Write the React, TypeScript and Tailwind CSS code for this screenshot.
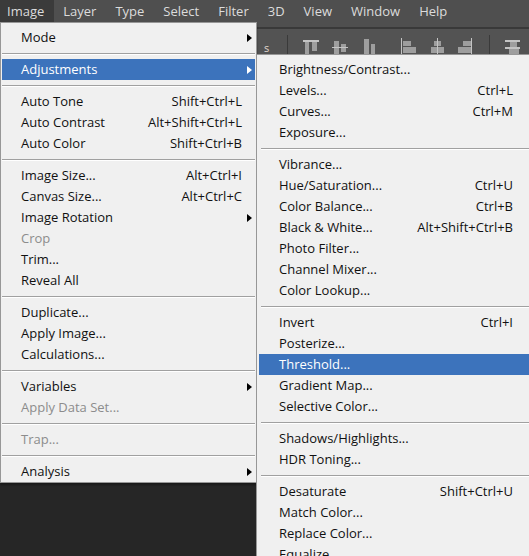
import React from "react";

type Entry =
  | { label: string; shortcut?: string; sub?: boolean; disabled?: boolean; active?: boolean }
  | "sep";

const leftItems: Entry[] = [
  { label: "Mode", sub: true },
  "sep",
  { label: "Adjustments", sub: true, active: true },
  "sep",
  { label: "Auto Tone", shortcut: "Shift+Ctrl+L" },
  { label: "Auto Contrast", shortcut: "Alt+Shift+Ctrl+L" },
  { label: "Auto Color", shortcut: "Shift+Ctrl+B" },
  "sep",
  { label: "Image Size...", shortcut: "Alt+Ctrl+I" },
  { label: "Canvas Size...", shortcut: "Alt+Ctrl+C" },
  { label: "Image Rotation", sub: true },
  { label: "Crop", disabled: true },
  { label: "Trim..." },
  { label: "Reveal All" },
  "sep",
  { label: "Duplicate..." },
  { label: "Apply Image..." },
  { label: "Calculations..." },
  "sep",
  { label: "Variables", sub: true },
  { label: "Apply Data Set...", disabled: true },
  "sep",
  { label: "Trap...", disabled: true },
  "sep",
  { label: "Analysis", sub: true },
];

const rightItems: Entry[] = [
  { label: "Brightness/Contrast..." },
  { label: "Levels...", shortcut: "Ctrl+L" },
  { label: "Curves...", shortcut: "Ctrl+M" },
  { label: "Exposure..." },
  "sep",
  { label: "Vibrance..." },
  { label: "Hue/Saturation...", shortcut: "Ctrl+U" },
  { label: "Color Balance...", shortcut: "Ctrl+B" },
  { label: "Black & White...", shortcut: "Alt+Shift+Ctrl+B" },
  { label: "Photo Filter..." },
  { label: "Channel Mixer..." },
  { label: "Color Lookup..." },
  "sep",
  { label: "Invert", shortcut: "Ctrl+I" },
  { label: "Posterize..." },
  { label: "Threshold...", active: true },
  { label: "Gradient Map..." },
  { label: "Selective Color..." },
  "sep",
  { label: "Shadows/Highlights..." },
  { label: "HDR Toning..." },
  "sep",
  { label: "Desaturate", shortcut: "Shift+Ctrl+U" },
  { label: "Match Color..." },
  { label: "Replace Color..." },
  { label: "Equalize" },
];

const menuBar = ["Image", "Layer", "Type", "Select", "Filter", "3D", "View", "Window", "Help"];

function Arrow({ white }: { white?: boolean }) {
  return (
    <svg width="5" height="8" viewBox="0 0 5 8" className="block">
      <path d="M0 0 L5 4 L0 8 Z" fill={white ? "#ffffff" : "#000000"} />
    </svg>
  );
}

function Separator({ indent }: { indent?: boolean }) {
  return (
    <div className={`h-[11px] flex flex-col justify-center ${indent ? "pl-[2px]" : ""}`}>
      <div className="h-[1px] bg-[#a0a0a0]" />
      <div className="h-[1px] bg-[#ffffff]" />
    </div>
  );
}

function LeftRow({ e }: { e: Exclude<Entry, "sep"> }) {
  const color = e.active ? "text-[#ffffff]" : e.disabled ? "text-[#8c8c8c]" : "text-[#111111]";
  return (
    <div
      className={`h-[21px] flex items-center pl-[19px] ${color} ${
        e.active ? "bg-[#3c73bc]" : ""
      }`}
    >
      <span className="flex-1 whitespace-nowrap">{e.label}</span>
      {e.shortcut && <span className="whitespace-nowrap">{e.shortcut}</span>}
      <div className="w-[13px] h-full flex items-center justify-end pr-[3px]">
        {e.sub && <Arrow white={e.active} />}
      </div>
    </div>
  );
}

function RightRow({ e }: { e: Exclude<Entry, "sep"> }) {
  const color = e.active ? "text-[#ffffff]" : e.disabled ? "text-[#8c8c8c]" : "text-[#111111]";
  return (
    <div
      className={`h-[21px] flex items-center pl-[20px] pr-[30px] ${color} ${
        e.active ? "bg-[#3c73bc]" : ""
      }`}
    >
      <span className="flex-1 whitespace-nowrap">{e.label}</span>
      {e.shortcut && <span className="whitespace-nowrap">{e.shortcut}</span>}
    </div>
  );
}

const iconFill = "#9e9e9e";
const barFill = "#c4c4c4";

function ToolIcon({ x0, children }: { x0: number; children: React.ReactNode }) {
  return (
    <svg width="20" height="25" viewBox={`${x0} 29 20 25`} className="block shrink-0">
      {children}
    </svg>
  );
}

export default function App() {
  return (
    <div
      className="relative w-[529px] h-[556px] overflow-hidden bg-[#262626] text-[13px] leading-none"
      style={{ fontFamily: '"Open Sans", "Noto Sans", sans-serif' }}
    >
      {/* Menu bar */}
      <div className="h-[27px] bg-[#4f4f4f] flex items-start text-[#dcdcdc]">
        {menuBar.map((m, i) => (
          <div
            key={m}
            className={`h-[22px] flex items-center pt-[1px] ${
              i === 0 ? "pl-[7px] pr-[9.5px] bg-[#3b3b3b]" : "px-[9.5px]"
            }`}
          >
            {m}
          </div>
        ))}
      </div>
      <div className="h-[2px] bg-[#393939]" />
      {/* Options toolbar */}
      <div className="h-[30px] bg-[#535353] flex items-start">
        <div className="w-[264px] shrink-0" />
        <div className="w-[8px] shrink-0 mt-[13px] text-[11px] text-[#e0d8d0]">s</div>
        <div className="ml-[15px] w-[1px] h-[24px] mt-[6px] bg-[#3a3a3a] shrink-0" />
        <div className="ml-[12px]">
          <ToolIcon x0={300}>
            <rect x="303" y="40" width="16" height="2" fill={barFill} />
            <rect x="305" y="42" width="4" height="14" fill={iconFill} />
            <rect x="312" y="42" width="5" height="9" fill={iconFill} />
          </ToolIcon>
        </div>
        <div className="ml-[9px]">
          <ToolIcon x0={329}>
            <rect x="334" y="41" width="5" height="14" fill={iconFill} />
            <rect x="341" y="44" width="5" height="8" fill={iconFill} />
            <rect x="332" y="47" width="16" height="1" fill={barFill} />
          </ToolIcon>
        </div>
        <div className="ml-[10px]">
          <ToolIcon x0={359}>
            <rect x="364" y="39" width="5" height="16" fill={iconFill} />
            <rect x="371" y="44" width="4" height="11" fill={iconFill} />
          </ToolIcon>
        </div>
        <div className="ml-[19px]">
          <ToolIcon x0={398}>
            <rect x="401" y="38" width="1" height="17" fill={barFill} />
            <rect x="403" y="41" width="8" height="5" fill={iconFill} />
            <rect x="403" y="47" width="13" height="6" fill={iconFill} />
          </ToolIcon>
        </div>
        <div className="ml-[10px]">
          <ToolIcon x0={428}>
            <rect x="434" y="41" width="7" height="5" fill={iconFill} />
            <rect x="431" y="47" width="13" height="6" fill={iconFill} />
            <rect x="437" y="38" width="1" height="17" fill={barFill} />
          </ToolIcon>
        </div>
        <div className="ml-[7px]">
          <ToolIcon x0={455}>
            <rect x="471" y="38" width="1" height="17" fill={barFill} />
            <rect x="463" y="41" width="8" height="5" fill={iconFill} />
            <rect x="458" y="47" width="13" height="6" fill={iconFill} />
          </ToolIcon>
        </div>
        <div className="ml-[14px] w-[1px] h-[24px] mt-[6px] bg-[#3a3a3a] shrink-0" />
        <div className="ml-[12px]">
          <ToolIcon x0={502}>
            <rect x="505" y="40" width="15" height="2" fill={barFill} />
            <rect x="510" y="42" width="7" height="5" fill={iconFill} />
            <rect x="505" y="47" width="15" height="2" fill={barFill} />
            <rect x="509" y="49" width="10" height="5" fill={iconFill} />
          </ToolIcon>
        </div>
      </div>

      {/* Image menu */}
      <div className="absolute left-0 top-[22px] w-[257px] bg-[#f0f0f0] border border-[#979797] px-[1px] pt-[4px] shadow-[0_2px_2px_rgba(0,0,0,0.35)]">
        {leftItems.map((e, i) =>
          e === "sep" ? <Separator key={i} /> : <LeftRow key={i} e={e} />
        )}
      </div>

      {/* Adjustments submenu */}
      <div className="absolute left-[256px] top-[54px] w-[290px] bg-[#f0f0f0] border border-[#979797] px-[2px] pt-[4px]">
        {rightItems.map((e, i) =>
          e === "sep" ? <Separator key={i} indent /> : <RightRow key={i} e={e} />
        )}
      </div>
    </div>
  );
}
